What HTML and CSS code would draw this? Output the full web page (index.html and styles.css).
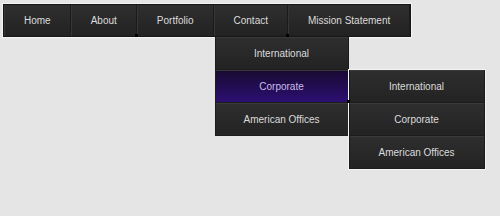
FILE: index.html
```html
<!DOCTYPE html>
<html lang="en">
<head>
    <meta charset="UTF-8">
    <title>Menu</title>
    <link rel="stylesheet" href="styles.css">
</head>
<body>
    <nav class="menu">
        <div class="item"><a href="#">Home</a></div>
        <div class="item has-sub"><a href="#">About</a></div>
        <div class="item"><a href="#">Portfolio</a></div>
        <div class="item has-sub"><a href="#">Contact</a>
            <div class="dropdown">
                <div class="sub-item"><a href="#">International</a></div>
                <div class="sub-item has-sub active"><a href="#">Corporate</a>
                    <div class="dropdown side">
                        <div class="sub-item"><a href="#">International</a></div>
                        <div class="sub-item"><a href="#">Corporate</a></div>
                        <div class="sub-item"><a href="#">American Offices</a></div>
                    </div>
                </div>
                <div class="sub-item"><a href="#">American Offices</a></div>
            </div>
        </div>
        <div class="item"><a href="#">Mission Statement</a></div>
    </nav>
</body>
</html>
```

FILE: styles.css
```css
body {
    margin: 0;
    padding: 4px 3px;
    min-height: 100vh;
    box-sizing: border-box;
    background: #e5e5e5;
    font-family: "Liberation Sans", Arial, sans-serif;
    font-size: 10px;
}

a {
    color: #dcdcdc;
    text-decoration: none;
}

.menu {
    display: inline-flex;
    border: 1px solid #161616;
    outline: 1px solid #f4f4f4;
    background: #262626;
}

.item {
    position: relative;
    border-left: 1px solid #363636;
    border-right: 1px solid #1b1b1b;
    background: linear-gradient(#2f2f2f, #222222);
}

.item > a {
    display: block;
    height: 31px;
    line-height: 31px;
    padding: 0 19px;
}

.has-sub::after {
    content: "";
    position: absolute;
    right: -2px;
    bottom: -1px;
    width: 3px;
    height: 3px;
    background: #000;
    z-index: 5;
}

.dropdown {
    position: absolute;
    top: 32px;
    left: 0;
    width: 132px;
    border: 1px solid #1a1a1a;
    border-width: 0 1px;
    background: #262626;
    z-index: 2;
}

.sub-item {
    position: relative;
    border-top: 1px solid #3a3a3a;
    border-bottom: 1px solid #1c1c1c;
    background: linear-gradient(#2e2e2e, #232323);
    text-align: center;
}

.sub-item > a {
    display: block;
    height: 31px;
    line-height: 31px;
}

.sub-item.active {
    background: linear-gradient(#190a33, #2c0f72);
}

.sub-item.active > a {
    color: #c9bde6;
}

.dropdown.side {
    top: -1px;
    left: 133px;
    width: 134px;
    outline: 1px solid #f4f4f4;
}
```
